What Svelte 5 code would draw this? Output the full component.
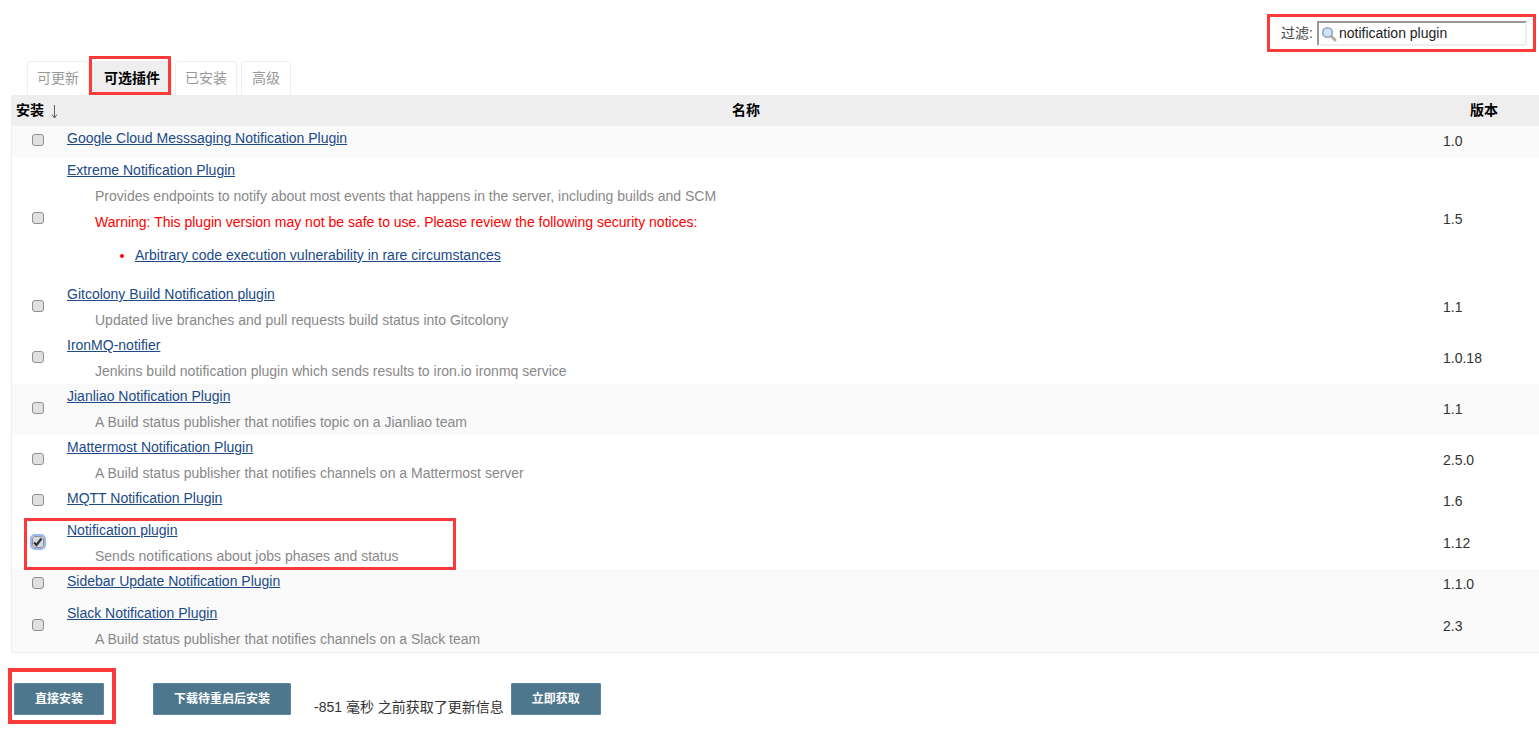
<script>
	const plugins = [
		{ name: 'Google Cloud Messsaging Notification Plugin', version: '1.0', alt: true },
		{
			name: 'Extreme Notification Plugin',
			desc: 'Provides endpoints to notify about most events that happens in the server, including builds and SCM',
			warning: 'Warning: This plugin version may not be safe to use. Please review the following security notices:',
			notice: 'Arbitrary code execution vulnerability in rare circumstances',
			version: '1.5'
		},
		{ name: 'Gitcolony Build Notification plugin', desc: 'Updated live branches and pull requests build status into Gitcolony', version: '1.1' },
		{ name: 'IronMQ-notifier', desc: 'Jenkins build notification plugin which sends results to iron.io ironmq service', version: '1.0.18' },
		{ name: 'Jianliao Notification Plugin', desc: 'A Build status publisher that notifies topic on a Jianliao team', version: '1.1', alt: true },
		{ name: 'Mattermost Notification Plugin', desc: 'A Build status publisher that notifies channels on a Mattermost server', version: '2.5.0' },
		{ name: 'MQTT Notification Plugin', version: '1.6' },
		{ name: 'Notification plugin', desc: 'Sends notifications about jobs phases and status', version: '1.12', checked: true },
		{ name: 'Sidebar Update Notification Plugin', version: '1.1.0', alt: true },
		{ name: 'Slack Notification Plugin', desc: 'A Build status publisher that notifies channels on a Slack team', version: '2.3', alt: true }
	];
	const tabs = ['可更新', '可选插件', '已安装', '高级'];
</script>

<div class="page">
	<div class="filter">
		<span class="filter-label">过滤:</span>
		<div class="filter-box">
			<svg width="16" height="16" viewBox="0 0 16 16">
				<line x1="10" y1="10" x2="14" y2="14" stroke="#b5aea4" stroke-width="3" stroke-linecap="round" />
				<circle cx="6.5" cy="6.5" r="4.8" fill="#d2e2f3" stroke="#8ba5c6" stroke-width="1.6" />
			</svg>
			<span>notification plugin</span>
		</div>
	</div>

	<div class="tabs">
		{#each tabs as tab, i}
			<a class="tab" class:active={i === 1} href="#top">{tab}</a>
		{/each}
	</div>

	<table>
		<thead>
			<tr>
				<th class="col-install">
					<div class="install-head">
						安装
						<svg width="7" height="14" viewBox="0 0 7 14">
							<path d="M3.5 0 V13 M1 9.5 L3.5 13 L6 9.5" fill="none" stroke="#56606e" stroke-width="1" />
						</svg>
					</div>
				</th>
				<th class="col-name">名称</th>
				<th class="col-version">版本</th>
			</tr>
		</thead>
		<tbody>
			{#each plugins as p}
				<tr class:alt={p.alt}>
					<td class="cell-check"><span class="check" class:checked={p.checked}>{#if p.checked}<svg width="12" height="12" viewBox="0 0 12 12"><path d="M2 6.5 L4.5 9 L9.5 2.5" fill="none" stroke="#333" stroke-width="2.2" /></svg>{/if}</span></td>
					<td class="cell-name">
						<a class="name" href="#top">{p.name}</a>
						{#if p.desc}<div class="desc">{p.desc}</div>{/if}
						{#if p.warning}
							<div class="warning">{p.warning}</div>
							<ul><li><a href="#top">{p.notice}</a></li></ul>
						{/if}
					</td>
					<td class="cell-version">{p.version}</td>
				</tr>
			{/each}
		</tbody>
	</table>

	<div class="actions">
		<button class="first">直接安装</button>
		<button class="second">下载待重启后安装</button>
		<span class="status">-851 毫秒 之前获取了更新信息</span>
		<button class="third">立即获取</button>
	</div>

	<!-- red annotation boxes drawn over the screenshot -->
	<div class="mark mark-filter"></div>
	<div class="mark mark-tab"></div>
	<div class="mark mark-row"></div>
	<div class="mark mark-button"></div>
</div>

<style>
	:global(body) {
		margin: 0;
		background: #fff;
		font-family: "Liberation Sans", "Noto Sans CJK SC", sans-serif;
		font-size: 14px;
		color: #333;
	}
	.page {
		position: relative;
		height: 747px;
		overflow: hidden;
		padding: 0 0 0 11px;
		box-sizing: border-box;
	}
	.filter {
		display: flex;
		justify-content: flex-end;
		align-items: center;
		height: 21px;
		padding: 23px 12px 0 0;
		gap: 4px;
		line-height: 21px;
	}
	.filter-label {
		color: #444;
		font-size: 14px;
	}
	.filter-box {
		width: 210px;
		height: 25px;
		box-sizing: border-box;
		border: 2px solid;
		border-color: #999 #eee #eee #999;
		display: flex;
		align-items: center;
		gap: 2px;
		padding-left: 2px;
		color: #222;
		font-size: 14px;
	}
	.tabs {
		display: flex;
		gap: 3px;
		margin: 17px 0 0 16px;
		height: 34px;
	}
	.tab {
		box-sizing: border-box;
		height: 34px;
		padding: 0 9px;
		line-height: 33px;
		border: 1px solid #eee;
		border-bottom: none;
		border-radius: 4px 4px 0 0;
		color: #999;
		text-decoration: none;
		font-size: 14px;
	}
	.tab:last-child {
		margin-left: 1px;
		padding: 0 10px;
	}
	.tab.active {
		background: #eee;
		border-color: #eee;
		color: #000;
		font-weight: bold;
		padding: 0 11px;
	}
	table {
		width: 1528px;
		border-collapse: collapse;
		border-bottom: 1px solid #eee;
		border-left: 1px solid #eee;
		table-layout: fixed;
	}
	th {
		height: 31px;
		padding: 0 0 3px;
		box-sizing: border-box;
		background: #eee;
		color: #000;
		font-size: 14px;
		font-weight: bold;
		text-align: center;
	}
	.col-install {
		width: 51.5px;
		text-align: left;
		padding-left: 4px;
	}
	.col-name {
		padding-right: 2px;
	}
	.install-head {
		display: flex;
		align-items: center;
		gap: 7px;
		white-space: nowrap;
	}
	.install-head svg {
		margin-top: 5px;
		flex: none;
	}
	.col-version {
		width: 108px;
		text-align: left;
		padding-left: 39px;
	}
	td {
		padding: 3px 4px;
		line-height: 18px;
		vertical-align: top;
	}
	tr.alt td {
		background: #fafafa;
	}
	.cell-check,
	.cell-version {
		vertical-align: middle;
	}
	.cell-check {
		padding: 0 0 4px 20px;
	}
	.cell-version {
		padding: 0 0 2px 12px;
		color: #333;
	}
	.check {
		display: block;
		box-sizing: border-box;
		width: 12px;
		height: 12px;
		border: 1px solid #8f8f8f;
		border-radius: 3px;
		background: #e0e0e0;
	}
	.check.checked {
		background: #d5d9e2;
		outline: 2px solid #9ab8ee;
		outline-offset: 0;
	}
	.check svg {
		display: block;
		margin: -1px;
	}
	a {
		color: #204a87;
	}
	.name {
		display: inline-block;
		margin-bottom: 8px;
	}
	.desc {
		padding-left: 28px;
		color: #888;
		line-height: 19px;
	}
	.warning {
		padding-left: 28px;
		margin-top: 7px;
		color: #f00;
		line-height: 19px;
	}
	ul {
		margin: 14px 0 15px;
		padding-left: 68px;
		color: #f00;
	}
	.actions {
		display: flex;
		align-items: flex-start;
		margin-top: 30px;
		padding-left: 3px;
	}
	button {
		height: 32px;
		border: 1px solid #5b87a0;
		background: #4e778e;
		color: #fff;
		font-family: inherit;
		font-size: 12px;
		font-weight: bold;
		padding: 0 0 3px;
		border-radius: 1px;
	}
	.first {
		width: 90px;
	}
	.second {
		width: 138px;
		margin-left: 49px;
	}
	.third {
		width: 90px;
	}
	.status {
		margin: 16px 7px 0 23px;
		color: #333;
		font-size: 14px;
		line-height: 17px;
	}
	.mark {
		position: absolute;
		box-sizing: border-box;
		border: 3px solid #fb3a3a;
		pointer-events: none;
	}
	.mark-filter {
		left: 1267px;
		top: 14px;
		width: 269px;
		height: 38px;
	}
	.mark-tab {
		left: 89px;
		top: 56px;
		width: 82px;
		height: 39px;
	}
	.mark-row {
		left: 24px;
		top: 518px;
		width: 432px;
		height: 52px;
	}
	.mark-button {
		left: 8px;
		top: 668px;
		width: 108px;
		height: 56px;
		border-width: 4px;
	}
</style>
